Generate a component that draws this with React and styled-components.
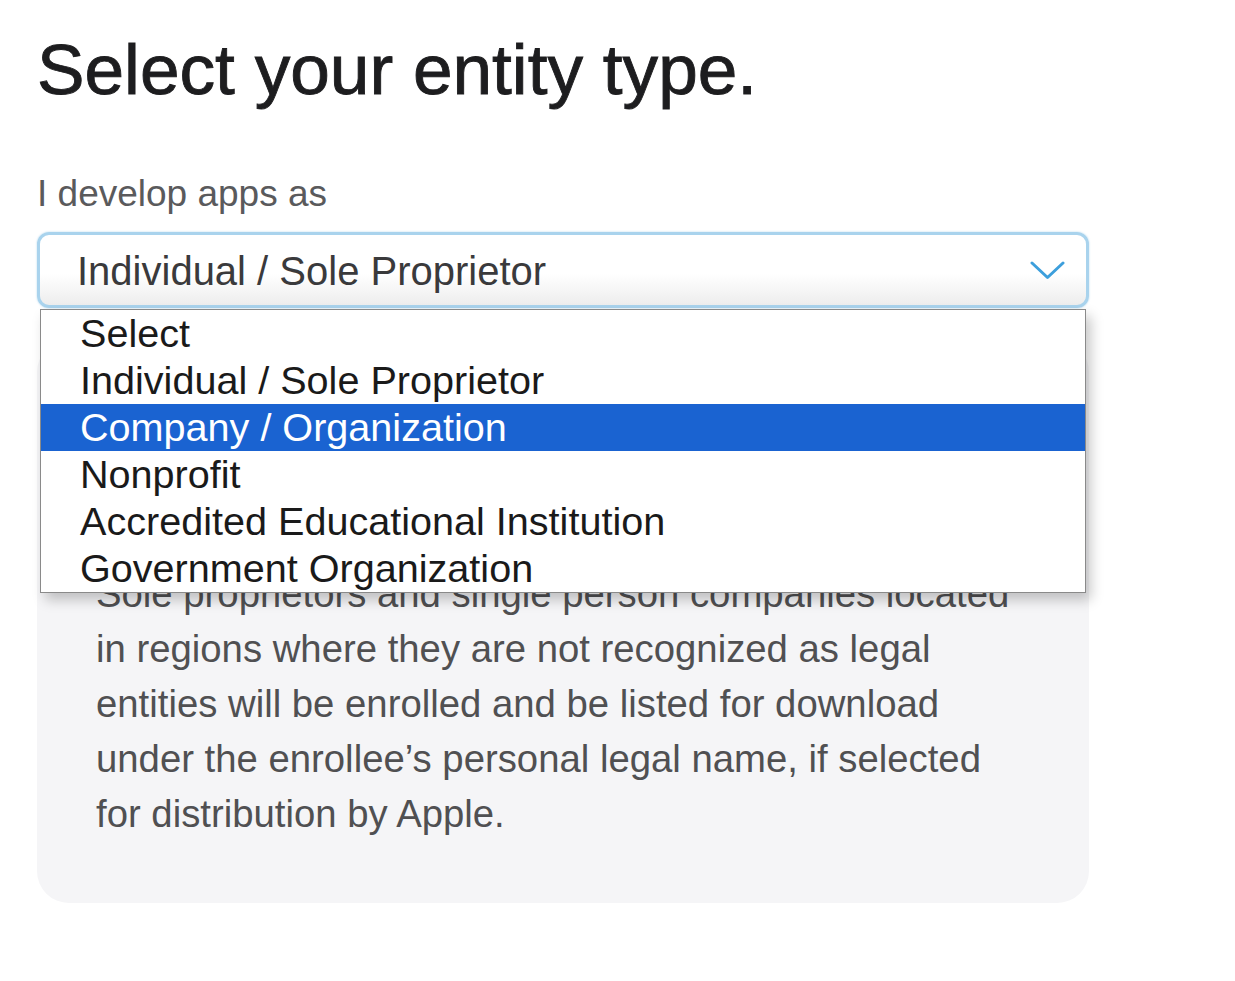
import { useState } from "react";
import styled, { createGlobalStyle } from "styled-components";

const GlobalStyle = createGlobalStyle`
  body {
    margin: 0;
    background-color: #ffffff;
    font-family: "Liberation Sans", Arial, sans-serif;
  }
`;

const Page = styled.div`
  width: 1052px;
  padding: 35px 0 80px 37px;
`;
const Title = styled.h1`
  margin: 0;
  font-size: 71.2px;
  line-height: 70px;
  font-weight: 400;
  color: #1d1d1f;
  -webkit-text-stroke: 0.9px #1d1d1f;
`;
const Label = styled.p`
  margin: 70px 0 20px;
  font-size: 37px;
  line-height: 37px;
  color: #5a5a5c;
`;
const SelectWrap = styled.div`
  position: relative;
  z-index: 2;
`;
const SelectBox = styled.div`
  box-sizing: border-box;
  height: 76px;
  display: flex;
  align-items: center;
  justify-content: space-between;
  padding: 3px 21px 0 37px;
  border: 3px solid #a9d3ed;
  border-radius: 12px;
  box-shadow: 0 0 2px rgba(120, 185, 225, 0.6);
  background: linear-gradient(to bottom, #ffffff 55%, #ededed 100%);
  font-size: 40px;
  color: #3a3a3c;
  cursor: pointer;
`;
const Chevron = styled.svg`
  width: 35px;
  height: 19px;
  margin-top: -2px;
`;
const ListBox = styled.ul`
  position: absolute;
  top: 77px;
  left: 3px;
  width: 1046px;
  box-sizing: border-box;
  margin: 0;
  padding: 0;
  list-style: none;
  background-color: #ffffff;
  border: 1.5px solid #8a8a8a;
  box-shadow: 5px 7px 12px rgba(0, 0, 0, 0.22);
`;
const Option = styled.li`
  height: 47px;
  padding-left: 39px;
  font-size: 39.6px;
  line-height: 47px;
  white-space: nowrap;
  color: ${(p) => (p.$active ? "#ffffff" : "#1a1a1a")};
  background-color: ${(p) => (p.$active ? "#1a63d1" : "transparent")};
`;
const InfoCard = styled.div`
  margin-top: 32px;
  padding: 226px 59px 62px;
  border-radius: 32px;
  background-color: #f5f5f7;
`;
const InfoText = styled.p`
  margin: 0;
  font-size: 38.3px;
  line-height: 55px;
  color: #505052;
  white-space: nowrap;
`;

const options = [
  "Select",
  "Individual / Sole Proprietor",
  "Company / Organization",
  "Nonprofit",
  "Accredited Educational Institution",
  "Government Organization",
];

const App = () => {
  const [hovered, setHovered] = useState(2);
  return (
    <Page>
      <GlobalStyle />
      <Title>Select your entity type.</Title>
      <Label>I develop apps as</Label>
      <SelectWrap>
        <SelectBox>
          <span>Individual / Sole Proprietor</span>
          <Chevron viewBox="0 0 35 19" fill="none">
            <polyline
              points="2,2 17.5,16.5 33,2"
              stroke="#3d9fdc"
              strokeWidth="3"
              strokeLinecap="round"
              strokeLinejoin="round"
            />
          </Chevron>
        </SelectBox>
        <ListBox role="listbox">
          {options.map((opt, i) => (
            <Option
              key={opt}
              role="option"
              $active={i === hovered}
              onMouseEnter={() => setHovered(i)}
            >
              {opt}
            </Option>
          ))}
        </ListBox>
      </SelectWrap>
      <InfoCard>
        <InfoText>
          Sole proprietors and single person companies located
          <br />
          in regions where they are not recognized as legal
          <br />
          entities will be enrolled and be listed for download
          <br />
          under the enrollee’s personal legal name, if selected
          <br />
          for distribution by Apple.
        </InfoText>
      </InfoCard>
    </Page>
  );
};

export default App;
